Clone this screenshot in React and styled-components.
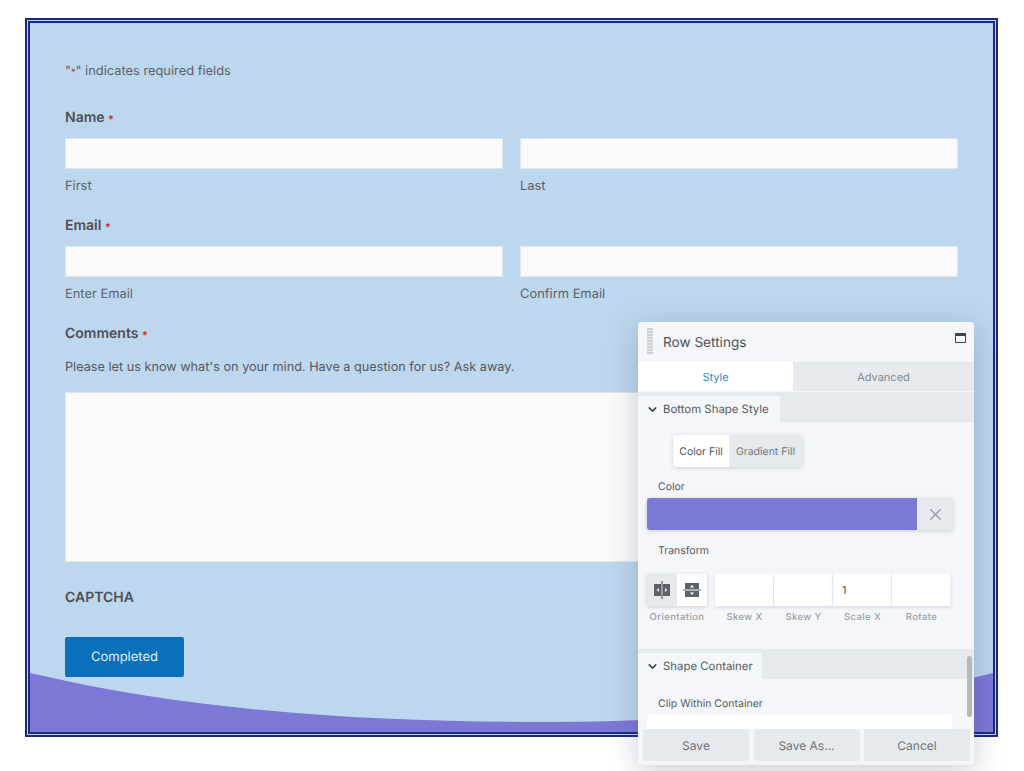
import React from 'react'
import styled, { createGlobalStyle } from 'styled-components'
import { ChevronDown, X } from 'lucide-react'

const GlobalStyle = createGlobalStyle`
  html, body {
    margin: 0;
    padding: 0;
    background: #fff;
  }
  body {
    font-family: Inter, "Liberation Sans", sans-serif;
    text-rendering: geometricPrecision;
    overflow: hidden;
  }
  * {
    box-sizing: border-box;
  }
`

const SPage = styled.div`
  position: relative;
  width: 1024px;
  height: 771px;
  padding: 18px 26px 0 25px;
`

const SFrame = styled.div`
  position: relative;
  height: 719px;
  border: 5px double #1c2a80;
  background: #bdd7ee;
  padding: 40px 35px 0 35px;
  overflow: hidden;
`

const SWave = styled.svg`
  position: absolute;
  left: 0;
  bottom: 0;
  width: 100%;
  height: 59px;
  display: block;
`

const SForm = styled.div`
  position: relative;
  display: flex;
  flex-direction: column;
`

const SNote = styled.div`
  font-size: 12.85px;
  line-height: 18px;
  color: #5d6167;
  margin-bottom: 26px;
`

const SRed = styled.span`
  color: #c8321e;
  line-height: 0;
  font-size: ${({ small }) => (small ? 9 : 11)}px;
  vertical-align: ${({ small }) => (small ? 0 : -1)}px;
`

const SLabel = styled.div`
  font-size: 14px;
  line-height: 20px;
  font-weight: 600;
  color: #4c5057;
  padding-top: 1px;
  margin-bottom: ${({ gap }) => gap}px;
`

const SRow = styled.div`
  display: grid;
  grid-template-columns: 438px 438px;
  column-gap: 17px;
  margin-bottom: 19px;
`

const SInput = styled.div`
  height: 31px;
  background: #fafafa;
  border: 1px solid #dfe6ec;
`

const SSub = styled.div`
  font-size: 12.9px;
  line-height: 18px;
  color: #5d6167;
  margin-top: 9px;
`

const SDescription = styled.div`
  font-size: 12.7px;
  line-height: 18px;
  color: #55595f;
  margin-bottom: 15px;
`

const STextarea = styled.div`
  height: 170px;
  background: #fafafa;
  border: 1px solid #dfe6ec;
  margin-bottom: 25px;
`

const SCaptcha = styled.div`
  font-size: 14px;
  line-height: 20px;
  font-weight: 600;
  color: #4c5057;
  padding-top: 1px;
  margin-bottom: 29px;
`

const SSubmit = styled.div`
  width: 119px;
  height: 40px;
  border-radius: 2px;
  background: #0a70bb;
  color: #e4eef7;
  font-size: 13px;
  display: flex;
  align-items: center;
  justify-content: center;
`

const SPanel = styled.div`
  position: absolute;
  left: 638px;
  top: 322px;
  width: 336px;
  height: 443px;
  background: #f4f6fa;
  border-radius: 4px;
  box-shadow: 0 6px 30px rgba(40, 50, 80, 0.25);
  overflow: hidden;
  display: flex;
  flex-direction: column;
`

const SHeader = styled.div`
  position: relative;
  height: 40px;
  flex: none;
  display: flex;
  align-items: center;
  padding: 1px 25px 0;
  font-size: 13.6px;
  color: #4f535a;
`

const SGrip = styled.div`
  position: absolute;
  left: 9px;
  top: 6px;
  width: 6px;
  height: 27px;
  background: repeating-linear-gradient(
    to bottom,
    #cdd1d7 0,
    #cdd1d7 2px,
    #e9ecf0 2px,
    #e9ecf0 3px
  );
`

const SMaximize = styled.div`
  position: absolute;
  left: 317px;
  top: 11px;
  width: 11px;
  height: 10px;
  border: 1px solid #3d4149;
  border-top-width: 3px;
  border-radius: 1px;
`

const STabs = styled.div`
  height: 29px;
  flex: none;
  display: grid;
  grid-template-columns: 155px 1fr;
`

const STab = styled.div`
  display: flex;
  align-items: center;
  justify-content: center;
  font-size: 11px;
  background: ${({ active }) => (active ? '#fff' : '#e6e9ed')};
  color: ${({ active }) => (active ? '#2b8fc4' : '#82878e')};
`

const SBody = styled.div`
  position: relative;
  flex: 1;
  min-height: 0;
  overflow: hidden;
  padding-top: 1px;
`

const SSectionBar = styled.div`
  height: 30px;
  padding-top: 4px;
  background: #e6e9ed;
`

const SSectionTitle = styled.div`
  height: 100%;
  width: ${({ width }) => width}px;
  background: #f4f6fa;
  display: flex;
  align-items: center;
  gap: 4px;
  padding-left: 8px;
  font-size: 11.4px;
  color: #55595f;
`

const SToggle = styled.div`
  display: grid;
  grid-template-columns: 56px 73px;
  width: 129px;
  height: 32px;
  margin: 13px 0 0 35px;
  border-radius: 3px;
  overflow: hidden;
  box-shadow: 0 1px 4px rgba(40, 50, 80, 0.2);
`

const SToggleItem = styled.div`
  display: flex;
  align-items: center;
  justify-content: center;
  font-size: 10.5px;
  background: ${({ active }) => (active ? '#fff' : '#e6e9ed')};
  color: ${({ active }) => (active ? '#4f535a' : '#72777e')};
`

const SFieldLabel = styled.div`
  font-size: 10.5px;
  line-height: 14px;
  color: #565a60;
  margin: ${({ top }) => top}px 0 ${({ bottom }) => bottom}px 20px;
`

const SColorField = styled.div`
  display: grid;
  grid-template-columns: 270px 36px;
  height: 32px;
  margin-left: 9px;
  width: 306px;
  border-radius: 3px;
  overflow: hidden;
  box-shadow: 0 1px 4px rgba(40, 50, 80, 0.2);
`

const SSwatch = styled.div`
  background: #7b78d6;
`

const SClear = styled.div`
  background: #e6e9ed;
  color: #979daf;
  display: flex;
  align-items: center;
  justify-content: center;
`

const STransform = styled.div`
  display: flex;
  gap: 8px;
  margin: 0 0 0 9px;
`

const SOrientation = styled.div`
  display: flex;
  flex-direction: column;
  align-items: center;
  width: 60px;
`

const SOrientationButtons = styled.div`
  display: grid;
  grid-template-columns: 30px 30px;
  height: 32px;
  border-radius: 3px;
  overflow: hidden;
  box-shadow: 0 1px 4px rgba(40, 50, 80, 0.2);
`

const SOrientationButton = styled.div`
  display: flex;
  align-items: center;
  justify-content: center;
  background: ${({ active }) => (active ? '#e6e9ed' : '#fff')};
`

const SCaption = styled.div`
  font-size: 9.5px;
  font-weight: 500;
  letter-spacing: 0.4px;
  line-height: 12px;
  color: #9a9ea5;
  margin-top: 6px;
  text-align: center;
  width: 100%;
  white-space: nowrap;
`

const SNumbers = styled.div`
  display: grid;
  grid-template-columns: repeat(4, 59px);
  width: 236px;
`

const SNumberCell = styled.div`
  display: flex;
  flex-direction: column;
`

const SNumberInput = styled.div`
  height: 32px;
  background: #fff;
  border-right: 1px solid #eef0f3;
  box-shadow: 0 2px 3px rgba(40, 50, 80, 0.12);
  font-size: 11px;
  color: #55595f;
  display: flex;
  align-items: center;
  padding-left: 9px;
`

const SDivider = styled.div`
  height: 25px;
`

const SWhiteField = styled.div`
  height: 40px;
  margin: 0 22px 0 9px;
  background: #fff;
  border-radius: 3px;
`

const SScrollbar = styled.div`
  position: absolute;
  right: 2px;
  top: 265px;
  width: 5px;
  height: 61px;
  border-radius: 3px;
  background: #b4b9c0;
`

const SFooter = styled.div`
  position: relative;
  flex: none;
  height: 36px;
  padding: 0 4px 4px 5px;
  display: grid;
  grid-template-columns: repeat(3, 106px);
  column-gap: 4.5px;
  background: #f4f6fa;
`

const SFooterButton = styled.div`
  background: #e6e9ed;
  border-radius: 2px;
  display: flex;
  align-items: center;
  justify-content: center;
  font-size: 12px;
  color: #6f747b;
`

const FlipHorizontal = () => (
  <svg width="18" height="18" viewBox="0 0 18 18">
    <path d="M1 3h7v12H1zM10 3h7v12h-7z" fill="#5e6269" />
    <path d="M9 0v18" stroke="#5e6269" strokeWidth="1.2" />
    <path d="M6 7v4L3.5 9zM12 7v4L14.5 9z" fill="#e6e9ed" />
  </svg>
)

const FlipVertical = () => (
  <svg width="18" height="18" viewBox="0 0 18 18">
    <path d="M2 2h14v6H2zM2 10h14v6H2z" fill="#5e6269" />
    <path d="M0 9h18" stroke="#5e6269" strokeWidth="1.2" />
    <path d="M7 6.5h4L9 4zM7 11.5h4L9 14z" fill="#fff" />
  </svg>
)

const numberFields = [
  { label: 'Skew X', value: '' },
  { label: 'Skew Y', value: '' },
  { label: 'Scale X', value: '1' },
  { label: 'Rotate', value: '' },
]

const RowSettings = () => (
  <SPanel>
    <SHeader>
      <SGrip />
      Row Settings
      <SMaximize />
    </SHeader>
    <STabs>
      <STab active>Style</STab>
      <STab>Advanced</STab>
    </STabs>
    <SBody>
      <SSectionBar>
        <SSectionTitle width={142}>
          <ChevronDown size={13} color="#3d4149" strokeWidth={2.8} />
          Bottom Shape Style
        </SSectionTitle>
      </SSectionBar>
      <SToggle>
        <SToggleItem active>Color Fill</SToggleItem>
        <SToggleItem>Gradient Fill</SToggleItem>
      </SToggle>
      <SFieldLabel top={13} bottom={4}>
        Color
      </SFieldLabel>
      <SColorField>
        <SSwatch />
        <SClear>
          <X size={19} strokeWidth={1.7} />
        </SClear>
      </SColorField>
      <SFieldLabel top={14} bottom={16}>
        Transform
      </SFieldLabel>
      <STransform>
        <SOrientation>
          <SOrientationButtons>
            <SOrientationButton active>
              <FlipHorizontal />
            </SOrientationButton>
            <SOrientationButton>
              <FlipVertical />
            </SOrientationButton>
          </SOrientationButtons>
          <SCaption>Orientation</SCaption>
        </SOrientation>
        <SNumbers>
          {numberFields.map((field) => (
            <SNumberCell key={field.label}>
              <SNumberInput>{field.value}</SNumberInput>
              <SCaption>{field.label}</SCaption>
            </SNumberCell>
          ))}
        </SNumbers>
      </STransform>
      <SDivider />
      <SSectionBar>
        <SSectionTitle width={124}>
          <ChevronDown size={13} color="#3d4149" strokeWidth={2.8} />
          Shape Container
        </SSectionTitle>
      </SSectionBar>
      <SFieldLabel top={18} bottom={4}>
        Clip Within Container
      </SFieldLabel>
      <SWhiteField />
      <SScrollbar />
    </SBody>
    <SFooter>
      <SFooterButton>Save</SFooterButton>
      <SFooterButton>Save As...</SFooterButton>
      <SFooterButton>Cancel</SFooterButton>
    </SFooter>
  </SPanel>
)

const App = () => (
  <SPage>
    <GlobalStyle />
    <SFrame>
      <SWave viewBox="0 0 963 59" preserveAspectRatio="none">
        <path d="M0 0C180 42 360 49 520 49C700 49 850 28 963 0V59H0Z" fill="#7d78d6" />
      </SWave>
      <SForm>
        <SNote>
          "<SRed small>*</SRed>" indicates required fields
        </SNote>
        <SLabel gap={10}>
          Name <SRed>*</SRed>
        </SLabel>
        <SRow>
          <div>
            <SInput />
            <SSub>First</SSub>
          </div>
          <div>
            <SInput />
            <SSub>Last</SSub>
          </div>
        </SRow>
        <SLabel gap={10}>
          Email <SRed>*</SRed>
        </SLabel>
        <SRow>
          <div>
            <SInput />
            <SSub>Enter Email</SSub>
          </div>
          <div>
            <SInput />
            <SSub>Confirm Email</SSub>
          </div>
        </SRow>
        <SLabel gap={15}>
          Comments <SRed>*</SRed>
        </SLabel>
        <SDescription>
          Please let us know what's on your mind. Have a question for us? Ask away.
        </SDescription>
        <STextarea />
        <SCaptcha>CAPTCHA</SCaptcha>
        <SSubmit>Completed</SSubmit>
      </SForm>
    </SFrame>
    <RowSettings />
  </SPage>
)

export default App
